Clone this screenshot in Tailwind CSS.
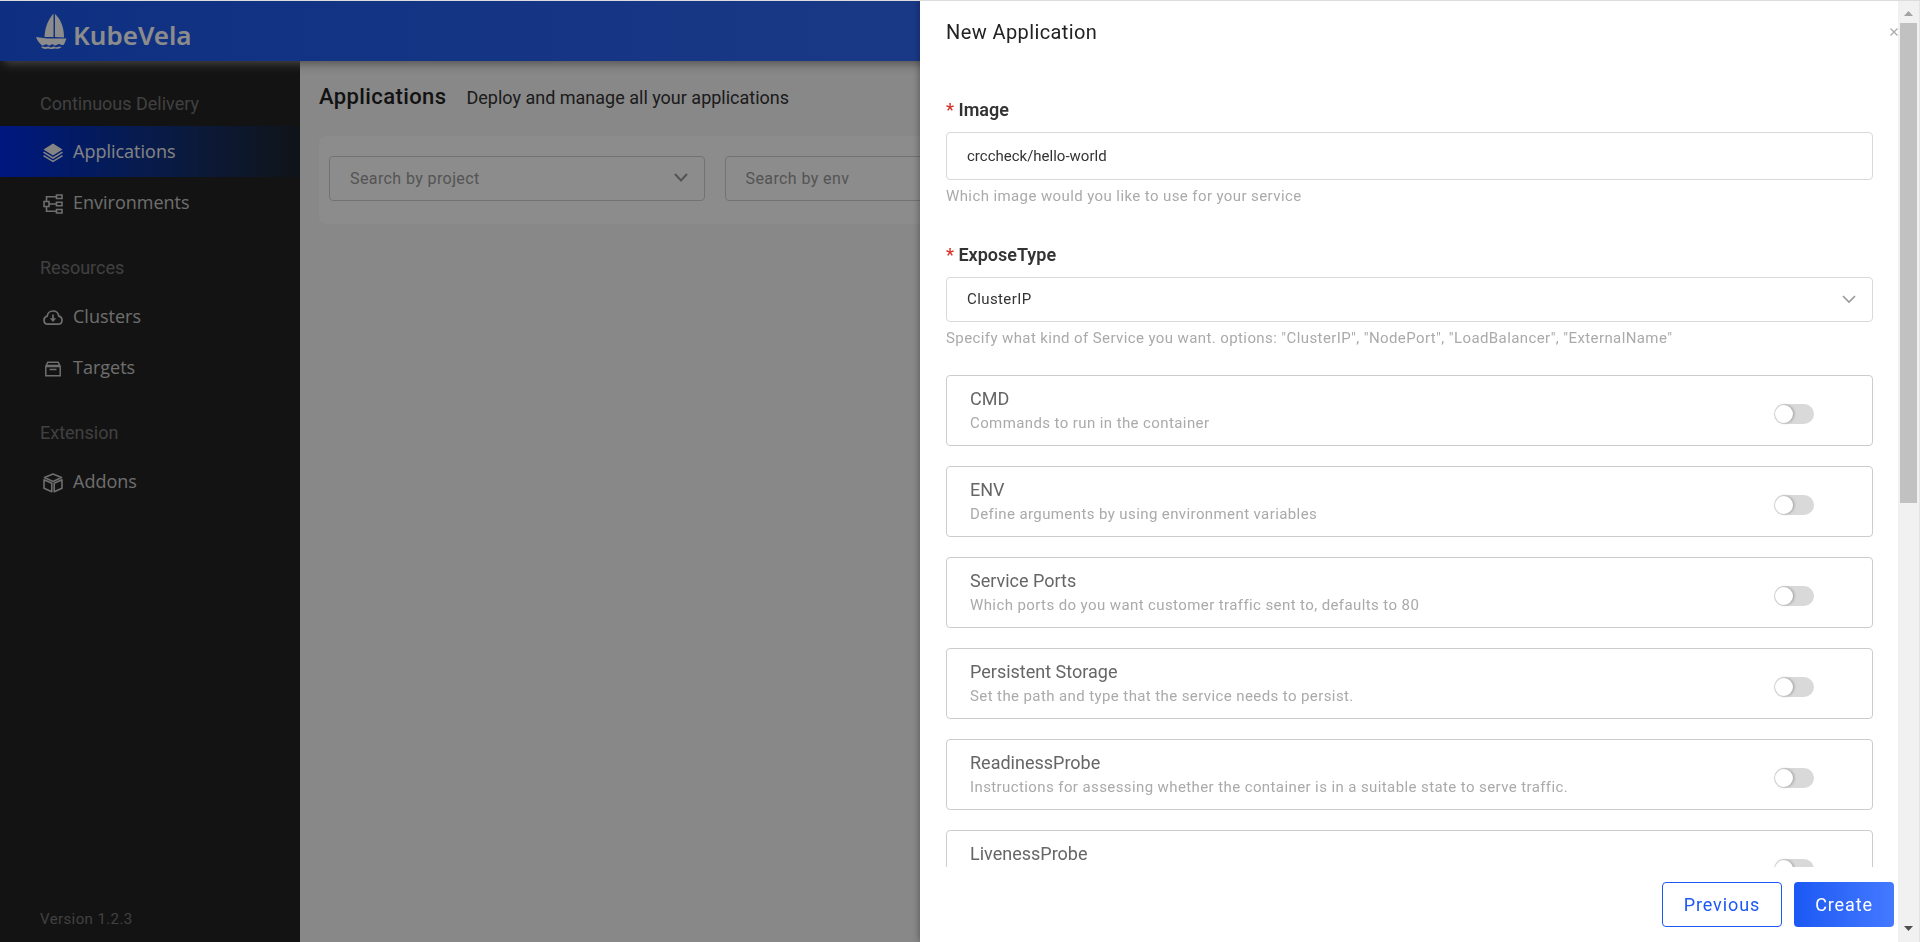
<!DOCTYPE html>
<html lang="en">
<head>
    <meta charset="UTF-8">
    <meta name="viewport" content="width=device-width, initial-scale=1.0">
    <title>KubeVela</title>
    <script src="https://cdn.jsdelivr.net/npm/@tailwindcss/browser@4"></script>
</head>
<body class="h-screen overflow-hidden bg-[#f7f7f7] font-[Roboto,sans-serif] tracking-wide text-[#333]">
    <div class="flex h-full flex-col">
        <!-- Top bar -->
        <header class="relative z-10 flex h-[61px] shrink-0 items-center bg-linear-to-r from-[#1b57ec] to-[#4479ff] px-9 shadow-[0_6px_10px_-4px_#8a8a8a]">
            <a href="#" class="flex items-center gap-1.5 text-white">
                <svg class="h-9 w-[31px]" viewBox="0 0 31 36" fill="currentColor">
                    <path d="M17.500 0.500V24H8.500C9 14 12 7 17.500 0.500Z"/>
                    <path d="M19 1C24.500 6 28 14 28 24.500L19 24Z"/>
                    <path d="M0 24L11 25.500H30.500L28 31.500C26 33 24.500 31 23 31C21.500 31 20 33 18.500 32.500C17 31 16 31 14.500 32C13 33 12 32.500 11 31.500C9 30.500 8 33 6 32.500C3 30 1 27 0 24Z"/>
                    <path d="M5 34C7 32.500 8 34.500 10 34C12 33 13 33.500 14.500 34.500C16 34.500 17 32.500 19 34C21 35 22 33 25.500 34C23 37 20 35 18.500 35.500C16 36.500 14 36 12 35.500C9 36.500 7 36 5 34Z"/>
                </svg>
                <span class="pt-2 font-['Noto_Sans',sans-serif] text-[26px] leading-8 font-semibold tracking-normal">KubeVela</span>
            </a>
        </header>

        <div class="flex min-h-0 flex-1">
            <!-- Sidebar -->
            <aside class="flex w-[300px] shrink-0 flex-col bg-[#242424] pt-0.5">
                <nav class="flex-1 font-['Open_Sans',sans-serif] text-lg tracking-normal text-[#c8c8c8]">
                    <h2 class="px-10 pt-[29px] pb-2.5 font-[Roboto,sans-serif] leading-6 text-[#767676]">Continuous Delivery</h2>
                    <a href="#" class="flex h-[51px] items-center gap-2.5 bg-linear-to-r from-[#0029ea] to-[#1d242e] px-[43px] pb-0.5 text-[#f0f0f0]">
                        <svg class="size-5 shrink-0 translate-y-0.5" viewBox="0 0 20 20" fill="none" stroke="currentColor" stroke-width="1.500">
                            <path d="M10 0.500L19.500 6.500L10 12.500L0.500 6.500Z" fill="currentColor" stroke="none"/>
                            <path d="M0.500 9.200L10 15L19.500 9.200M0.500 12.600L10 18.400L19.500 12.600"/>
                        </svg>
                        Applications
                    </a>
                    <a href="#" class="flex h-[51px] items-center gap-2.5 px-[43px] pb-0.5">
                        <svg class="size-5 shrink-0 translate-y-0.5" viewBox="0 0 20 20" fill="none" stroke="currentColor" stroke-width="1.600">
                            <path d="M1 7.500H6V12.500H1ZM13.500 1H19V4.500H13.500ZM13.500 8.300H19V11.700H13.500ZM13.500 15.500H19V19H13.500ZM6 10H13.500M3.500 7.500V2.800H13.500M3.500 12.500V17.200H13.500"/>
                        </svg>
                        Environments
                    </a>

                    <h2 class="px-10 pt-7 pb-[11px] font-[Roboto,sans-serif] leading-6 text-[#767676]">Resources</h2>
                    <a href="#" class="flex h-[51px] items-center gap-2.5 px-[43px] pb-0.5">
                        <svg class="size-5 shrink-0 translate-y-0.5" viewBox="0 0 20 20" fill="none" stroke="currentColor" stroke-width="1.700">
                            <path d="M5 16.200C2.500 16.200 1 14.500 1 12.200C1 10 2.500 8.500 4.200 8.100C4.500 5 7 3 10 3C13 3 15.300 5 15.800 8.100C17.700 8.500 19 10 19 12.200C19 14.500 17.400 16.200 15 16.200Z"/>
                            <path d="M10 6.500V11"/>
                            <path d="M6.800 10.300H13.200L10 14Z" fill="currentColor" stroke="none"/>
                        </svg>
                        Clusters
                    </a>
                    <a href="#" class="flex h-[51px] items-center gap-2.5 px-[43px] pb-0.5">
                        <svg class="size-5 shrink-0 translate-y-0.5" viewBox="0 0 20 20" fill="none" stroke="currentColor" stroke-width="1.500">
                            <path d="M2.800 7.500V16.700H17.200V7.500ZM2.800 7.500L4.800 3.200H15.200L17.200 7.500M2.500 6.500H17.500M6.500 10.500H13.500"/>
                        </svg>
                        Targets
                    </a>

                    <h2 class="px-10 pt-7 pb-[11px] font-[Roboto,sans-serif] leading-6 text-[#767676]">Extension</h2>
                    <a href="#" class="flex h-[51px] items-center gap-2.5 px-[43px] pb-0.5">
                        <svg class="size-5 shrink-0 translate-y-0.5" viewBox="0 0 20 20" fill="none" stroke="currentColor" stroke-width="1.600" stroke-linejoin="round">
                            <path d="M10 1L18.500 4.600L10 8.400L1.500 4.600ZM1 6.800L8.800 10.300V18.800L1 15.200ZM19 6.800L11.200 10.300V18.800L19 15.200Z"/>
                        </svg>
                        Addons
                    </a>
                </nav>
                <p class="px-10 pb-[11px] text-[15px] leading-6 text-[#767676]">Version 1.2.3</p>
            </aside>

            <!-- Applications page -->
            <main class="flex-1 px-[19px] pt-[19px]">
                <div class="flex h-8 items-center gap-5">
                    <h1 class="text-[22px] font-medium text-[#222]">Applications</h1>
                    <p class="pt-1 text-lg tracking-normal">Deploy and manage all your applications</p>
                </div>
                <div class="mt-6 grid grid-cols-4 gap-5 rounded-lg bg-white px-2.5 pt-5 pb-[23px]">
                    <div class="relative">
                        <select aria-label="Search by project" class="h-[45px] w-full appearance-none rounded border border-[#d0d0d0] px-5 text-base text-[#999]">
                            <option>Search by project</option>
                        </select>
                        <svg class="pointer-events-none absolute top-4 right-4 h-3 w-4" viewBox="0 0 16 12" fill="none" stroke="#999" stroke-width="2"><path d="M2 2L8 8.500L14 2"/></svg>
                    </div>
                    <div class="relative">
                        <select aria-label="Search by env" class="h-[45px] w-full appearance-none rounded border border-[#d0d0d0] px-5 text-base text-[#999]">
                            <option>Search by env</option>
                        </select>
                    </div>
                </div>
            </main>
        </div>
    </div>

    <!-- Backdrop -->
    <div class="fixed inset-0 z-20 bg-black/45"></div>

    <!-- New application drawer -->
    <section role="dialog" aria-labelledby="drawerTitle" class="fixed inset-y-0 right-0 z-30 flex w-[1000px] max-w-full bg-white shadow-[0_0_8px_rgba(0,0,0,0.4)]">
        <form class="flex min-w-0 flex-1 flex-col">
            <div class="flex h-16 shrink-0 items-center justify-between pl-[26px]">
                <h2 id="drawerTitle" class="text-xl text-[#222]">New Application</h2>
                <button type="button" aria-label="Close" class="h-8 w-2">
                    <svg class="size-2" viewBox="0 0 8 8" fill="none" stroke="#aaa" stroke-width="1.300"><path d="M0.500 0.500L7.500 7.500M7.500 0.500L0.500 7.500"/></svg>
                </button>
            </div>

            <div class="min-h-0 flex-1 overflow-hidden pt-[34px] pr-[25px] pl-[26px]">
                <label for="image" class="block text-lg leading-6 font-semibold tracking-normal"><span class="font-medium text-[#d93026]">*</span> Image</label>
                <input id="image" type="text" value="crccheck/hello-world" class="mt-2.5 block h-12 w-full rounded border border-[#d9d9d9] px-5 text-[15px] tracking-normal">
                <p class="mt-1 text-[15px] leading-6 text-[#aaa]">Which image would you like to use for your service</p>

                <label for="exposeType" class="mt-[35px] block text-lg leading-6 font-semibold tracking-normal"><span class="font-medium text-[#d93026]">*</span> ExposeType</label>
                <div class="relative mt-2.5">
                    <select id="exposeType" class="block h-[45px] w-full appearance-none rounded border border-[#d9d9d9] px-5 text-[15px]">
                        <option>ClusterIP</option>
                        <option>NodePort</option>
                        <option>LoadBalancer</option>
                        <option>ExternalName</option>
                    </select>
                    <svg class="pointer-events-none absolute top-4 right-4 h-3 w-4" viewBox="0 0 16 12" fill="none" stroke="#999" stroke-width="1.600"><path d="M2 3L8 9L14 3"/></svg>
                </div>
                <p class="mt-1 text-[15px] leading-6 text-[#aaa]">Specify what kind of Service you want. options: "ClusterIP", "NodePort", "LoadBalancer", "ExternalName"</p>

                <div class="mt-[25px] space-y-5">
                    <label class="flex h-[71px] items-center justify-between rounded border border-[#ccc] pr-[58px] pl-[23px]">
                        <span>
                            <span class="block text-lg leading-6 tracking-normal text-[#666]">CMD</span>
                            <span class="block text-[15px] leading-6 text-[#aaa]">Commands to run in the container</span>
                        </span>
                        <input type="checkbox" role="switch" class="mt-1.5 h-5 w-10 appearance-none rounded-full bg-[#d9d9d9] p-px before:block before:size-[18px] before:rounded-full before:bg-white before:shadow-[1px_0_3px_rgba(0,0,0,0.3)] checked:bg-[#1b58f4] checked:before:translate-x-5">
                    </label>
                    <label class="flex h-[71px] items-center justify-between rounded border border-[#ccc] pr-[58px] pl-[23px]">
                        <span>
                            <span class="block text-lg leading-6 tracking-normal text-[#666]">ENV</span>
                            <span class="block text-[15px] leading-6 text-[#aaa]">Define arguments by using environment variables</span>
                        </span>
                        <input type="checkbox" role="switch" class="mt-1.5 h-5 w-10 appearance-none rounded-full bg-[#d9d9d9] p-px before:block before:size-[18px] before:rounded-full before:bg-white before:shadow-[1px_0_3px_rgba(0,0,0,0.3)] checked:bg-[#1b58f4] checked:before:translate-x-5">
                    </label>
                    <label class="flex h-[71px] items-center justify-between rounded border border-[#ccc] pr-[58px] pl-[23px]">
                        <span>
                            <span class="block text-lg leading-6 tracking-normal text-[#666]">Service Ports</span>
                            <span class="block text-[15px] leading-6 text-[#aaa]">Which ports do you want customer traffic sent to, defaults to 80</span>
                        </span>
                        <input type="checkbox" role="switch" class="mt-1.5 h-5 w-10 appearance-none rounded-full bg-[#d9d9d9] p-px before:block before:size-[18px] before:rounded-full before:bg-white before:shadow-[1px_0_3px_rgba(0,0,0,0.3)] checked:bg-[#1b58f4] checked:before:translate-x-5">
                    </label>
                    <label class="flex h-[71px] items-center justify-between rounded border border-[#ccc] pr-[58px] pl-[23px]">
                        <span>
                            <span class="block text-lg leading-6 tracking-normal text-[#666]">Persistent Storage</span>
                            <span class="block text-[15px] leading-6 text-[#aaa]">Set the path and type that the service needs to persist.</span>
                        </span>
                        <input type="checkbox" role="switch" class="mt-1.5 h-5 w-10 appearance-none rounded-full bg-[#d9d9d9] p-px before:block before:size-[18px] before:rounded-full before:bg-white before:shadow-[1px_0_3px_rgba(0,0,0,0.3)] checked:bg-[#1b58f4] checked:before:translate-x-5">
                    </label>
                    <label class="flex h-[71px] items-center justify-between rounded border border-[#ccc] pr-[58px] pl-[23px]">
                        <span>
                            <span class="block text-lg leading-6 tracking-normal text-[#666]">ReadinessProbe</span>
                            <span class="block text-[15px] leading-6 text-[#aaa]">Instructions for assessing whether the container is in a suitable state to serve traffic.</span>
                        </span>
                        <input type="checkbox" role="switch" class="mt-1.5 h-5 w-10 appearance-none rounded-full bg-[#d9d9d9] p-px before:block before:size-[18px] before:rounded-full before:bg-white before:shadow-[1px_0_3px_rgba(0,0,0,0.3)] checked:bg-[#1b58f4] checked:before:translate-x-5">
                    </label>
                    <label class="flex h-[71px] items-center justify-between rounded border border-[#ccc] pr-[58px] pl-[23px]">
                        <span class="block pb-6 text-lg leading-6 tracking-normal text-[#666]">LivenessProbe</span>
                        <input type="checkbox" role="switch" class="mt-1.5 h-5 w-10 appearance-none rounded-full bg-[#d9d9d9] p-px before:block before:size-[18px] before:rounded-full before:bg-white before:shadow-[1px_0_3px_rgba(0,0,0,0.3)] checked:bg-[#1b58f4] checked:before:translate-x-5">
                    </label>
                </div>
            </div>

            <div class="flex shrink-0 justify-end gap-3 pt-[15px] pr-1 pb-[15px]">
                <button type="button" class="h-[45px] rounded border border-[#1b58f4] px-[21px] text-lg tracking-wider text-[#1b58f4]">Previous</button>
                <button type="submit" class="h-[45px] rounded bg-linear-to-r from-[#1b58f4] to-[#4479ff] px-[21px] text-lg tracking-wider text-white">Create</button>
            </div>
        </form>

        <!-- Scrollbar -->
        <div class="flex w-[22px] shrink-0 flex-col items-center border-r border-[#e4e4e4] bg-[#f1f1f1]">
            <svg class="my-1 h-[15px] w-[9px] shrink-0" viewBox="0 0 9 15" fill="#a3a3a3"><path d="M0 12L4.500 7L9 12Z"/></svg>
            <div class="h-[51%] w-[17px] bg-[#c1c1c1]"></div>
            <svg class="mt-auto mb-1 h-[15px] w-[9px] shrink-0" viewBox="0 0 9 15" fill="#505050"><path d="M0 3L4.500 8L9 3Z"/></svg>
        </div>
    </section>

    <!-- Window edge -->
    <div class="fixed inset-x-0 top-0 z-40 h-px bg-[#dcdcdc]"></div>
</body>
</html>
